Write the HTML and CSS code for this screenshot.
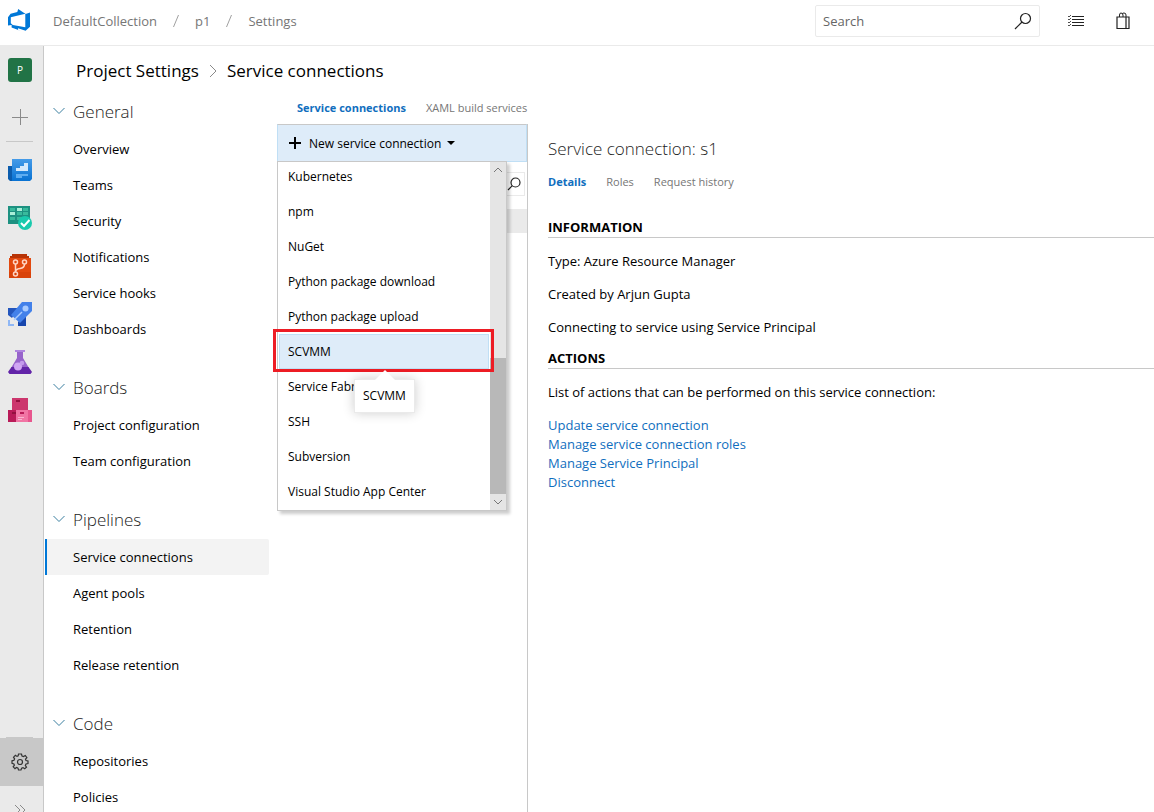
FILE: index.html
```html
<!DOCTYPE html>
<html lang="en">

<head>
    <meta charset="UTF-8">
    <meta name="viewport" content="width=device-width, initial-scale=1.0">
    <title>Service connections - Settings</title>
    <link rel="stylesheet" href="styles.css">
</head>

<body>
    <!-- top bar -->
    <header class="top-bar">
        <a class="logo" href="#" aria-label="Azure DevOps">
            <svg width="24" height="24" viewBox="0 0 24 24">
                <path fill="#0078d7" fill-rule="evenodd" d="M0 8.300 2.600 4.800 9.300 3.100 10.200 0 17.600 5 22 3.500V17.700L17.600 21.700 10 19.300V20.800L13 22 3.600 18.600V16L0 16.500ZM2.800 8.300V14.200L4.800 16 17.300 18.200V4.800Z"/>
            </svg>
        </a>
        <nav class="breadcrumb">
            <a href="#">DefaultCollection</a>
            <svg class="slash" width="6" height="14" viewBox="0 0 6 14"><path d="M5.500 1 .5 13"/></svg>
            <a href="#">p1</a>
            <svg class="slash" width="6" height="14" viewBox="0 0 6 14"><path d="M5.500 1 .5 13"/></svg>
            <a href="#">Settings</a>
        </nav>
        <form class="search-box">
            <input type="text" placeholder="Search" aria-label="Search">
            <button type="button" aria-label="Start search">
                <svg width="18" height="18" viewBox="0 0 18 18" fill="none" stroke="#222" stroke-width="1.200"><circle cx="11.500" cy="6.500" r="5"/><path d="M8 10 1 17"/></svg>
            </button>
        </form>
        <button class="top-icon" type="button" aria-label="Work items">
            <svg width="18" height="14" viewBox="0 0 18 14" fill="none" stroke="#222"><path d="M5 2.500H17M5 5.500H17M5 8.500H17M5 11.500H17"/><path stroke-width=".8" d="M1 2 2 3 4 1M1 5 2 6 4 4M1 8 2 9 4 7M1 11 2 12 4 10"/></svg>
        </button>
        <button class="top-icon" type="button" aria-label="Marketplace">
            <svg width="14" height="18" viewBox="0 0 14 18" fill="none" stroke="#222"><path stroke-width="1.200" d="M1 5H13V16.500H1ZM10 5V16.500"/><path d="M3.500 5V3Q3.500 1 5 1T7 3V5M6 2Q6.500 1 8 1 10 1 10 3V5"/></svg>
        </button>
    </header>

    <div class="page">
        <!-- icon rail -->
        <nav class="rail">
            <a class="rail-item project" href="#" aria-label="Project p1"><span class="project-tile">P</span></a>
            <a class="rail-item" href="#" aria-label="Add">
                <svg width="16" height="16" viewBox="0 0 16 16" stroke="#8a8a8a"><path d="M8.500 0V16M0 8.500H16"/></svg>
            </a>
            <hr class="rail-line">
            <a class="rail-item" href="#" aria-label="Overview">
                <svg width="24" height="22" viewBox="0 0 24 22">
                    <defs><linearGradient id="blue" x2="0" y2="1"><stop stop-color="#459be8"/><stop offset="1" stop-color="#0872d2"/></linearGradient></defs>
                    <path fill="#0b5cad" d="M0 7H5V22H2L0 20Z"/>
                    <path fill="url(#blue)" d="M4 0H24V20L22 22H4Z"/>
                    <path fill="#d5e9fb" d="M8 12V9H12V7H16V4H20V12Z"/>
                    <path fill="#5eadf1" d="M8 15H20V17H14V19H8Z"/>
                </svg>
            </a>
            <a class="rail-item" href="#" aria-label="Boards">
                <svg width="24" height="24" viewBox="0 0 24 24">
                    <path fill="#1d9181" d="M0 0H22V18H0Z"/>
                    <path fill="#39ba9c" d="M2 2H7V5H2ZM15 2H20V5H15ZM9 6H14V9H9ZM15 6H20V9H15ZM2 11H7V14H2ZM9 11H14V14H9Z"/>
                    <path fill="#a9efd8" d="M9 2H14V5H9ZM2 6H7V9H2Z"/>
                    <circle cx="17" cy="17" r="7" fill="#19caad"/>
                    <path fill="none" stroke="#fff" stroke-width="2" d="M13 17 16 20 21.500 14"/>
                </svg>
            </a>
            <a class="rail-item" href="#" aria-label="Repos">
                <svg width="24" height="24" viewBox="0 0 24 24">
                    <path fill="#b83406" d="M4 0H19V2H21V5H2V2H4Z"/>
                    <path fill="#e2490f" d="M1 4H23V24H1Z"/>
                    <path fill="#cf3d08" d="M1 18H23V24H1Z" opacity=".5"/>
                    <g fill="none" stroke="#ffd6c5" stroke-width="1.500"><circle cx="7.500" cy="8" r="2"/><circle cx="16.500" cy="8" r="2"/><circle cx="7.500" cy="20" r="2"/><path d="M7.500 10V18M16.500 10Q16.500 14 12 14.500T7.500 18"/></g>
                </svg>
            </a>
            <a class="rail-item" href="#" aria-label="Pipelines">
                <svg width="24" height="24" viewBox="0 0 24 24">
                    <path fill="#2456bd" d="M0 6H10L4 16 0 13Z"/>
                    <path fill="#1746ad" d="M10 20 18 11V24H10Z"/>
                    <path fill="#4381ea" d="M14 0H24V9L12 21 3 13Z"/>
                    <circle cx="17.500" cy="6.500" r="3" fill="#a9cbff"/>
                    <path stroke="#a9cbff" stroke-width="1.500" d="M6 18 14 10"/>
                    <path fill="#8fb7f5" d="M0 18H2V22H6V24H0Z"/>
                </svg>
            </a>
            <a class="rail-item" href="#" aria-label="Test plans">
                <svg width="24" height="24" viewBox="0 0 24 24">
                    <path fill="#9763cb" d="M9 2H15V8L21 18H3L9 8Z"/>
                    <path fill="#af85df" d="M7 0H17V2H7Z"/>
                    <path fill="#6224a8" d="M3.500 17H20.500L24 22 22.500 24H1.500L0 22Z"/>
                    <circle cx="10" cy="16.500" r="4" fill="#d0a5f3"/>
                    <circle cx="14" cy="13" r="2.300" fill="#c49aec"/>
                </svg>
            </a>
            <a class="rail-item" href="#" aria-label="Artifacts">
                <svg width="24" height="24" viewBox="0 0 24 24">
                    <path fill="#cc366d" d="M4 0H20V12H4Z"/>
                    <path fill="#b91b58" d="M0 12H8V24H0Z"/>
                    <path fill="#f175a4" d="M8 12H24V24H8Z"/>
                    <path fill="#e8568e" d="M20 12H24V24H20Z"/>
                    <path fill="#93103f" d="M8 2H12V4H8ZM4 14H8V16H4Z"/>
                    <path fill="#b91b58" d="M12 14H16V16H12Z"/>
                    <path stroke="#f9b4cf" d="M10 19.500H16M10 21.500H14"/>
                </svg>
            </a>
            <div class="rail-bottom">
                <hr class="rail-line">
                <a class="rail-item current" href="#" aria-label="Project settings">
                    <svg width="18" height="18" viewBox="0 0 18 18" fill="none" stroke="#333" stroke-width="1.200">
                        <circle cx="9" cy="9" r="2.500"/>
                        <path d="M7.500 1H10.500L11 3 12.500 3.600 14.300 2.500 15.900 4.600 14.500 6.200 15 7.500 17 8V10.500L15 11 14.300 12.400 15.500 14.100 13.700 15.800 12 14.600 10.600 15.200 10 17H7.500L7 15.200 5.600 14.500 4 15.600 2.200 13.800 3.400 12.200 2.900 11 1 10.400V7.800L3 7.300 3.600 5.800 2.500 4.200 4.400 2.300 6 3.400 7.200 2.900Z"/>
                    </svg>
                </a>
                <button class="rail-expand" type="button" aria-label="Expand">
                    <svg width="12" height="12" viewBox="0 0 12 12" fill="none" stroke="#8a8a8a"><path d="M1 1 6 6 1 11M6 1 11 6 6 11"/></svg>
                </button>
            </div>
        </nav>

        <div class="content">
            <div class="page-title">
                <a href="#">Project Settings</a>
                <svg width="8" height="14" viewBox="0 0 8 14" fill="none" stroke="#8a8a8a"><path d="M1 1 7 7 1 13"/></svg>
                <h1>Service connections</h1>
            </div>

            <div class="columns">
                <!-- settings menu -->
                <nav class="settings-nav">
                    <section>
                        <h2><svg class="chevron" viewBox="0 0 12 8"><path d="M.5 1 6 6.500 11.500 1"/></svg>General</h2>
                        <a href="#">Overview</a>
                        <a href="#">Teams</a>
                        <a href="#">Security</a>
                        <a href="#">Notifications</a>
                        <a href="#">Service hooks</a>
                        <a href="#">Dashboards</a>
                    </section>
                    <section>
                        <h2><svg class="chevron" viewBox="0 0 12 8"><path d="M.5 1 6 6.500 11.500 1"/></svg>Boards</h2>
                        <a href="#">Project configuration</a>
                        <a href="#">Team configuration</a>
                    </section>
                    <section>
                        <h2><svg class="chevron" viewBox="0 0 12 8"><path d="M.5 1 6 6.500 11.500 1"/></svg>Pipelines</h2>
                        <a class="selected" href="#">Service connections</a>
                        <a href="#">Agent pools</a>
                        <a href="#">Retention</a>
                        <a href="#">Release retention</a>
                    </section>
                    <section>
                        <h2><svg class="chevron" viewBox="0 0 12 8"><path d="M.5 1 6 6.500 11.500 1"/></svg>Code</h2>
                        <a href="#">Repositories</a>
                        <a href="#">Policies</a>
                    </section>
                </nav>

                <main class="hub">
                    <nav class="tabs hub-tabs">
                        <a class="active" href="#">Service connections</a>
                        <a href="#">XAML build services</a>
                    </nav>

                    <div class="hub-body">
                        <div class="connections">
                            <button class="new-connection" type="button" aria-expanded="true">
                                <svg width="12" height="12" viewBox="0 0 12 12" stroke="#000" stroke-width="2"><path d="M6 0V12M0 6H12"/></svg>
                                <span>New service connection</span>
                                <svg width="8" height="4" viewBox="0 0 8 4"><path d="M0 0H8L4 4Z"/></svg>
                            </button>
                            <div class="filter">
                                <input type="text" aria-label="Filter connections">
                                <svg width="14" height="14" viewBox="0 0 14 14" fill="none" stroke="#222" stroke-width="1.200"><circle cx="8.500" cy="5.500" r="4.500"/><path d="M5.300 8.700 1 13"/></svg>
                            </div>
                            <div class="connection-row"></div>

                            <!-- drop-down list of connection types -->
                            <div class="type-menu">
                                <ul>
                                    <li><button type="button">Kubernetes</button></li>
                                    <li><button type="button">npm</button></li>
                                    <li><button type="button">NuGet</button></li>
                                    <li><button type="button">Python package download</button></li>
                                    <li><button type="button">Python package upload</button></li>
                                    <li class="highlighted">
                                        <button type="button" aria-describedby="type-tip">SCVMM</button>
                                        <span class="tooltip" id="type-tip" role="tooltip">SCVMM</span>
                                    </li>
                                    <li><button type="button">Service Fabric</button></li>
                                    <li><button type="button">SSH</button></li>
                                    <li><button type="button">Subversion</button></li>
                                    <li><button type="button">Visual Studio App Center</button></li>
                                </ul>
                                <div class="scrollbar">
                                    <svg viewBox="0 0 16 16"><path d="M4 10 8 6 12 10"/></svg>
                                    <div class="thumb"></div>
                                    <svg viewBox="0 0 16 16"><path d="M4 6 8 10 12 6"/></svg>
                                </div>
                            </div>
                        </div>

                        <article class="details">
                            <h2>Service connection: s1</h2>
                            <nav class="tabs">
                                <a class="active" href="#">Details</a>
                                <a href="#">Roles</a>
                                <a href="#">Request history</a>
                            </nav>
                            <h3>INFORMATION</h3>
                            <p>Type: Azure Resource Manager</p>
                            <p>Created by Arjun Gupta</p>
                            <p>Connecting to service using Service Principal</p>
                            <h3 class="actions-title">ACTIONS</h3>
                            <p>List of actions that can be performed on this service connection:</p>
                            <ul class="actions">
                                <li><a href="#">Update service connection</a></li>
                                <li><a href="#">Manage service connection roles</a></li>
                                <li><a href="#">Manage Service Principal</a></li>
                                <li><a href="#">Disconnect</a></li>
                            </ul>
                        </article>
                    </div>
                </main>
            </div>
        </div>
    </div>
</body>

</html>
```
FILE: styles.css
```css
* {
    box-sizing: border-box;
}

body {
    margin: 0;
    display: flex;
    flex-direction: column;
    height: 100vh;
    overflow: hidden;
    font-family: "Open Sans", "Noto Sans", sans-serif;
    font-size: 13px;
    color: #000;
    background: #fff;
}

h1,
h2,
h3,
p,
ul {
    margin: 0;
    padding: 0;
}

ul {
    list-style: none;
}

a {
    color: inherit;
    text-decoration: none;
}

button,
input {
    font: inherit;
    color: inherit;
    border: none;
    background: none;
    padding: 0;
}

svg {
    display: block;
    flex: none;
}

/* Top bar */
.top-bar {
    display: flex;
    align-items: center;
    flex: none;
    height: 46px;
    padding: 0 20px 3px 8px;
    border-bottom: 1px solid #eaeaea;
}

.breadcrumb {
    display: flex;
    align-items: center;
    gap: 16px;
    margin-left: 21px;
    color: #767676;
}

.slash {
    fill: none;
    stroke: #a0a0a0;
}

.search-box {
    display: flex;
    align-items: center;
    width: 225px;
    height: 32px;
    margin-left: auto;
    margin-right: 15px;
    padding: 0 7px;
    border: 1px solid #eaeaea;
    border-radius: 2px;
}

.search-box input {
    flex: 1;
    min-width: 0;
}

.search-box input::placeholder {
    color: #666;
}

.top-icon {
    display: flex;
    justify-content: center;
    width: 22px;
    margin-left: 10px;
}

.top-icon + .top-icon {
    margin-left: 25px;
}

/* Icon rail */
.page {
    display: flex;
    flex: 1;
    min-height: 0;
}

.rail {
    display: flex;
    flex-direction: column;
    flex: none;
    width: 44px;
    background: #eaeaea;
    border-right: 1px solid #c8c8c8;
}

.rail-item {
    display: flex;
    align-items: center;
    flex: none;
    height: 48px;
    padding-left: 8px;
}

.rail-item.project {
    height: 47px;
}

.rail-item svg {
    margin: 0 auto 0 0;
}

.rail-item svg[width="16"] {
    margin-left: 4px;
}

.project-tile {
    width: 24px;
    height: 24px;
    border-radius: 3px;
    background: #217346;
    color: #fff;
    font-size: 10px;
    line-height: 24px;
    text-align: center;
}

.rail-line {
    width: 27px;
    height: 1px;
    margin: 0 0 4px 6px;
    border: none;
    background: #c8c8c8;
}

.rail-bottom {
    margin-top: auto;
}

.rail-bottom .rail-line {
    margin-bottom: 0;
}

.rail-item.current {
    background: #c8c8c8;
    padding-left: 11px;
}

.rail-expand {
    display: block;
    height: 26px;
    padding: 18px 0 0 14px;
    overflow: hidden;
}

/* Page title */
.content {
    flex: 1;
    min-width: 0;
}

.page-title {
    display: flex;
    align-items: center;
    gap: 10px;
    height: 47px;
    padding: 2px 0 0 32px;
    font-size: 17px;
}

.page-title h1 {
    font-size: 17px;
    font-weight: 400;
}

.columns {
    display: flex;
}

/* Settings menu */
.settings-nav {
    flex: none;
    width: 225px;
}

.settings-nav section {
    margin-bottom: 22px;
}

.settings-nav h2 {
    display: flex;
    align-items: center;
    gap: 8px;
    height: 38px;
    padding: 0 0 2px 9px;
    font-size: 17px;
    font-weight: 300;
    color: #222;
}

.chevron {
    width: 12px;
    height: 8px;
    fill: none;
    stroke: #3a7f9f;
}

.settings-nav a {
    display: block;
    height: 36px;
    padding-left: 29px;
    line-height: 36px;
}

.settings-nav a.selected {
    background: #f3f3f3;
    box-shadow: inset 1px 0 #fff, inset 3px 0 #0078d7;
    border-radius: 0 2px 2px 0;
}

/* Tabs */
.tabs {
    display: flex;
    gap: 20px;
    font-size: 11px;
    line-height: 20px;
    color: #767676;
}

.tabs .active {
    color: #106ebe;
    font-weight: 700;
}

.hub {
    flex: 1;
    min-width: 0;
    margin-left: 8px;
}

.hub-tabs {
    height: 31px;
    padding: 5px 0 0 20px;
}

.hub-body {
    display: flex;
    height: calc(100vh - 124px);
}

/* Connections list */
.connections {
    position: relative;
    flex: none;
    width: 251px;
    border-right: 1px solid #c8c8c8;
}

.new-connection {
    display: flex;
    align-items: center;
    gap: 6px;
    width: 100%;
    height: 38px;
    padding-left: 11px;
    font-size: 12px;
    background: #deecf9;
    border: 1px solid #c0dff5;
    border-top-color: #c8c8c8;
}

.new-connection span {
    padding-left: 2px;
}

.filter {
    display: flex;
    align-items: center;
    height: 24px;
    margin: 10px 2px 0 10px;
    padding-right: 3px;
    border: 1px solid #eaeaea;
}

.filter input {
    flex: 1;
    min-width: 0;
}

.connection-row {
    height: 24px;
    margin-top: 13px;
    background: #eaeaea;
}

.type-menu {
    position: absolute;
    top: 37px;
    left: 0;
    display: flex;
    width: 230px;
    background: #fff;
    border: 1px solid #c8c8c8;
    box-shadow: 3px 3px 3px rgba(0, 0, 0, 0.2);
    font-size: 12px;
}

.type-menu ul {
    flex: 1;
    padding-bottom: 1px;
}

.type-menu li {
    position: relative;
}

.type-menu button {
    display: block;
    width: 100%;
    height: 35px;
    padding: 0 0 0 10px;
    text-align: left;
}

/* the list is scrolled, so its first row is cut at the top */
.type-menu li:first-child button {
    height: 32px;
    padding-bottom: 3px;
}

.type-menu .highlighted {
    z-index: 1;
    padding: 0 1px;
}

.type-menu .highlighted button {
    padding-left: 8px;
    background: #deecf9;
    border: 1px solid #c0dff5;
}

.highlighted::after {
    content: "";
    position: absolute;
    inset: -5px -4px -3px -5px;
    border: 3px solid #ed1c24;
}

.tooltip {
    position: absolute;
    top: 45px;
    left: 76px;
    z-index: 2;
    padding: 7px 8px;
    line-height: 18px;
    background: #fff;
    border: 1px solid #eaeaea;
    box-shadow: 0 0 12px rgba(0, 0, 0, 0.2);
}

.tooltip::before {
    content: "";
    position: absolute;
    top: -10px;
    left: 20px;
    border: 10px solid transparent;
    border-top: none;
    border-bottom-color: #fff;
}

.scrollbar {
    display: flex;
    flex-direction: column;
    width: 16px;
    background: #e5e5e5;
}

.scrollbar svg {
    width: 16px;
    height: 16px;
    fill: none;
    stroke: #777;
}

.thumb {
    height: 136px;
    margin-top: auto;
    background: #b8b8b8;
}

/* Details */
.details {
    flex: 1;
    min-width: 0;
    padding: 14px 0 0 20px;
    line-height: 19px;
}

.details h2 {
    font-size: 17px;
    font-weight: 300;
    line-height: 22px;
    color: #222;
}

.details .tabs {
    margin-top: 12px;
}

.details h3 {
    margin-top: 26px;
    font-size: 13px;
    font-weight: 700;
    border-bottom: 1px solid #c8c8c8;
}

.details .actions-title {
    margin-top: 12px;
}

.details p,
.actions {
    margin-top: 14px;
}

.actions {
    color: #106ebe;
}
```
